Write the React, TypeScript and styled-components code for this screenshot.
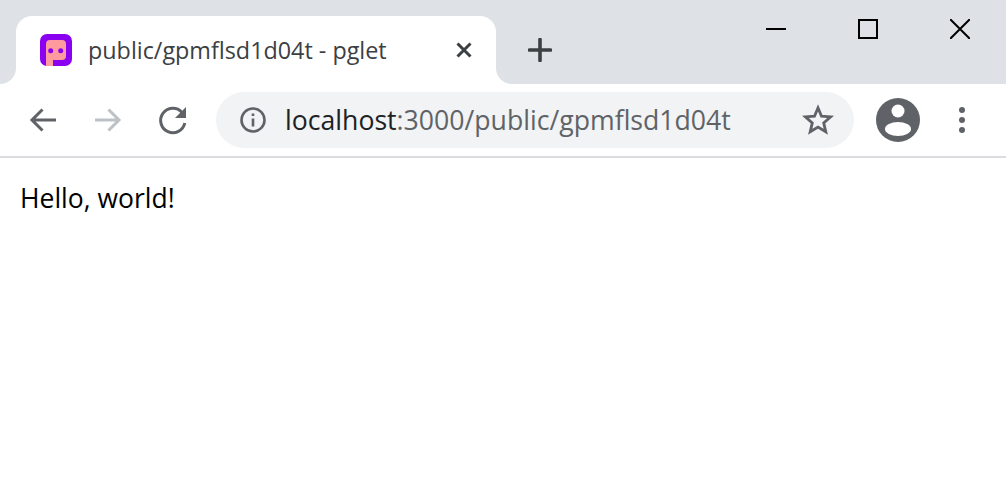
import React from 'react'
import styled, { createGlobalStyle } from 'styled-components'

const GlobalStyle = createGlobalStyle`
    html, body {
        margin: 0;
        padding: 0;
        background: #fff;
        font-family: "Open Sans", "Noto Sans", "Liberation Sans", sans-serif;
    }
`

const Browser = styled.div`
    width: 1006px;
    height: 491px;
    display: flex;
    flex-direction: column;
    overflow: hidden;
`

const TabStrip = styled.header`
    height: 84px;
    flex: none;
    display: flex;
    align-items: flex-start;
    padding-left: 16px;
    box-sizing: border-box;
    background: #dee1e6;
`

const Tab = styled.div`
    position: relative;
    width: 480px;
    height: 68px;
    margin-top: 16px;
    padding: 0 24px 0 24px;
    box-sizing: border-box;
    display: flex;
    align-items: center;
    background: #fff;
    border-radius: 16px 16px 0 0;

    &::before,
    &::after {
        content: '';
        position: absolute;
        bottom: 0;
        width: 16px;
        height: 16px;
    }
    &::before {
        left: -16px;
        background: radial-gradient(circle at 0 0, #dee1e6 15.5px, #fff 16.5px);
    }
    &::after {
        right: -16px;
        background: radial-gradient(circle at 100% 0, #dee1e6 15.5px, #fff 16.5px);
    }
`

const TabTitle = styled.span`
    flex: 1;
    margin-left: 16px;
    font-size: 23.35px;
    color: #3c4043;
    white-space: nowrap;
`

const NewTabButton = styled.button`
    width: 44px;
    height: 44px;
    margin: 28px 0 0 22px;
    padding: 0;
    border: 0;
    background: none;
    display: flex;
    align-items: center;
    justify-content: center;
`

const WindowControls = styled.div`
    margin-left: auto;
    display: flex;
`

const WindowButton = styled.button`
    width: 92px;
    height: 58px;
    padding: 0;
    border: 0;
    background: none;
    display: flex;
    align-items: center;
    justify-content: center;
`

const Toolbar = styled.nav`
    height: 74px;
    flex: none;
    box-sizing: border-box;
    display: flex;
    align-items: flex-start;
    padding: 8px 0 0 21px;
    background: #fff;
    border-bottom: 2px solid #dadce0;
`

const ToolButton = styled.button<{ $gap?: number }>`
    width: 44px;
    height: 56px;
    margin-right: ${({ $gap }) => $gap ?? 21}px;
    padding: 0;
    border: 0;
    background: none;
    display: flex;
    align-items: center;
    justify-content: center;
`

const AddressBar = styled.div`
    width: 638px;
    height: 56px;
    margin: 0 22px 0 1px;
    padding: 0 20px 0 23px;
    box-sizing: border-box;
    display: flex;
    align-items: center;
    background: #f1f3f4;
    border-radius: 28px;
`

const Url = styled.span`
    flex: 1;
    margin-left: 18px;
    font-size: 26.65px;
    color: #5f6368;
    white-space: nowrap;
`

const Host = styled.span`
    color: #202124;
`

const Content = styled.main`
    padding: 23px 20px;
    font-size: 26.5px;
    line-height: 34px;
    color: #000;
`

const App = (): JSX.Element => {
    return (
        <Browser>
            <GlobalStyle />
            <TabStrip>
                <Tab>
                    <svg width="32" height="32" viewBox="0 0 32 32">
                        <rect width="32" height="32" rx="7" fill="#8a00f0" />
                        <path
                            d="M10 6h12a4 4 0 0 1 4 4v12a4 4 0 0 1-4 4h-9v6H6V10a4 4 0 0 1 4-4z"
                            fill="#ff9a9e"
                        />
                        <circle cx="10.700" cy="16.700" r="2.500" fill="#8a00f0" />
                        <circle cx="20.700" cy="16.700" r="2.500" fill="#8a00f0" />
                    </svg>
                    <TabTitle>public/gpmflsd1d04t - pglet</TabTitle>
                    <svg width="16" height="16" viewBox="0 0 16 16">
                        <path
                            d="M1.500 1.500l13 13M14.500 1.500l-13 13"
                            stroke="#3c4043"
                            strokeWidth="3"
                        />
                    </svg>
                </Tab>
                <NewTabButton>
                    <svg width="24" height="24" viewBox="0 0 24 24">
                        <path
                            d="M12 1.500v21M1.500 12h21"
                            stroke="#3c4043"
                            strokeWidth="3.600"
                            strokeLinecap="round"
                        />
                    </svg>
                </NewTabButton>
                <WindowControls>
                    <WindowButton>
                        <svg width="20" height="20" viewBox="0 0 20 20">
                            <path d="M0 10h20" stroke="#000" strokeWidth="2" />
                        </svg>
                    </WindowButton>
                    <WindowButton>
                        <svg width="20" height="20" viewBox="0 0 20 20">
                            <rect
                                x="1"
                                y="1"
                                width="18"
                                height="18"
                                fill="none"
                                stroke="#000"
                                strokeWidth="2"
                            />
                        </svg>
                    </WindowButton>
                    <WindowButton>
                        <svg width="20" height="20" viewBox="0 0 20 20">
                            <path
                                d="M0 0l20 20M20 0L0 20"
                                stroke="#000"
                                strokeWidth="2"
                            />
                        </svg>
                    </WindowButton>
                </WindowControls>
            </TabStrip>
            <Toolbar>
                <ToolButton>
                    <svg width="32" height="32" viewBox="0 0 32 32">
                        <path
                            d="M29 16H5M15.500 5.500L5 16l10.500 10.500"
                            fill="none"
                            stroke="#5f6368"
                            strokeWidth="3"
                        />
                    </svg>
                </ToolButton>
                <ToolButton>
                    <svg width="32" height="32" viewBox="0 0 32 32">
                        <path
                            d="M3 16h24M16.500 5.500L27 16 16.500 26.500"
                            fill="none"
                            stroke="#bdc1c6"
                            strokeWidth="3"
                        />
                    </svg>
                </ToolButton>
                <ToolButton $gap={20}>
                    <svg width="32" height="32" viewBox="0 0 32 32">
                        <path
                            d="M24.800 8.200A12.200 12.200 0 1 0 27.800 19"
                            fill="none"
                            stroke="#5f6368"
                            strokeWidth="3"
                        />
                        <path d="M29 3v11H18z" fill="#5f6368" />
                    </svg>
                </ToolButton>
                <AddressBar>
                    <svg width="28" height="28" viewBox="0 0 28 28">
                        <circle
                            cx="14"
                            cy="14"
                            r="11.500"
                            fill="none"
                            stroke="#5f6368"
                            strokeWidth="2.600"
                        />
                        <path d="M12.700 12.500h2.600v8h-2.600zM12.700 7.500h2.600v2.600h-2.600z" fill="#5f6368" />
                    </svg>
                    <Url>
                        <Host>localhost</Host>:3000/public/gpmflsd1d04t
                    </Url>
                    <svg width="32" height="32" viewBox="0 0 32 32">
                        <path
                            d="M16 3.800l3.500 8.400 9.100.7-6.900 6 2.100 8.900-7.800-4.700-7.800 4.700 2.100-8.900-6.900-6 9.100-.7z"
                            fill="none"
                            stroke="#5f6368"
                            strokeWidth="2.800"
                        />
                    </svg>
                </AddressBar>
                <ToolButton $gap={20}>
                    <svg width="44" height="44" viewBox="0 0 44 44">
                        <circle cx="22" cy="22" r="22" fill="#5f6368" />
                        <circle cx="22" cy="13" r="6.500" fill="#fff" />
                        <ellipse cx="22" cy="31" rx="13" ry="7" fill="#fff" />
                    </svg>
                </ToolButton>
                <ToolButton>
                    <svg width="8" height="28" viewBox="0 0 8 28">
                        <circle cx="4" cy="4" r="3" fill="#5f6368" />
                        <circle cx="4" cy="14" r="3" fill="#5f6368" />
                        <circle cx="4" cy="24" r="3" fill="#5f6368" />
                    </svg>
                </ToolButton>
            </Toolbar>
            <Content>Hello, world!</Content>
        </Browser>
    )
}

export default App
